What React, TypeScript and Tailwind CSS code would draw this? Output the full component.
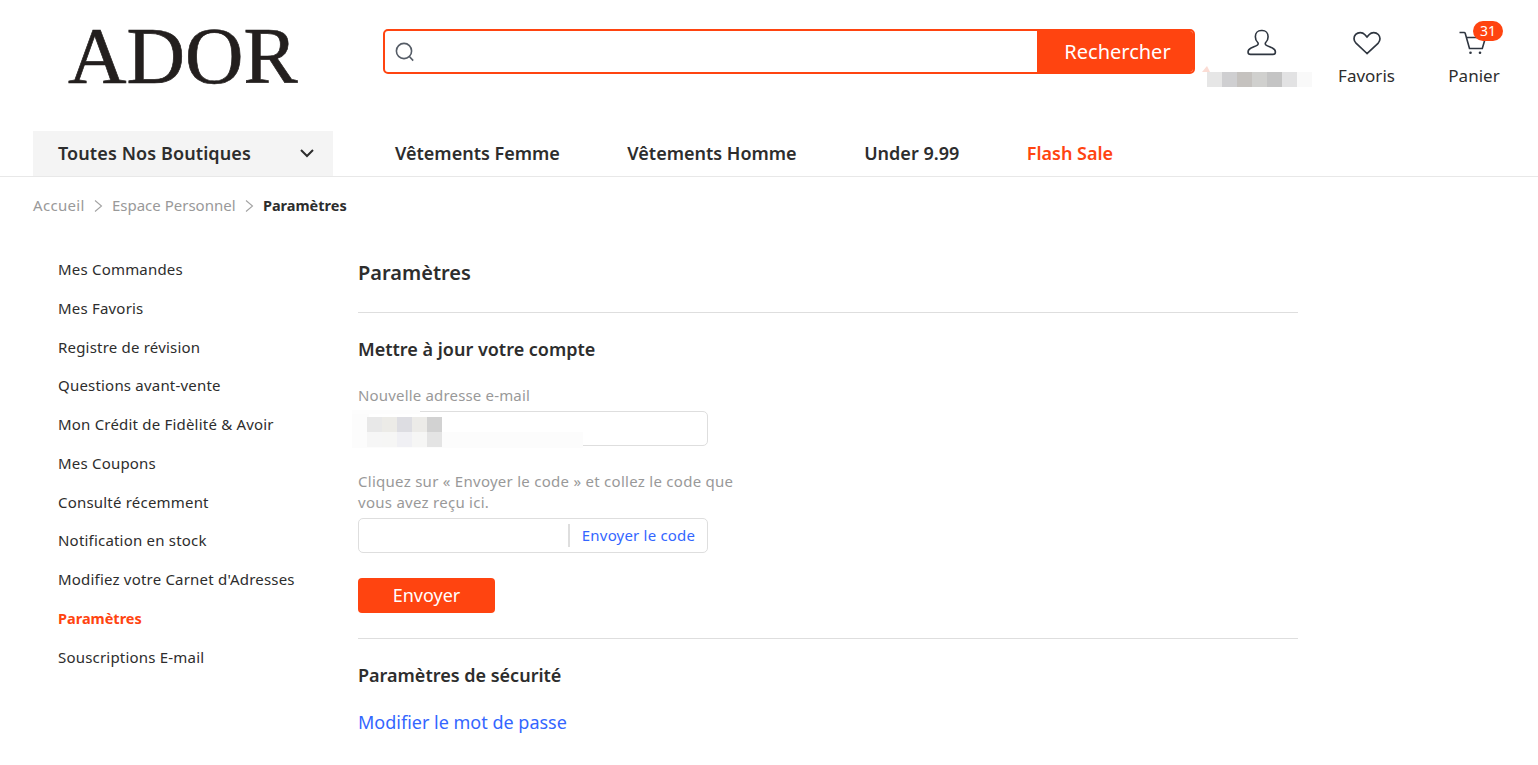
const sideLinks = [
  "Mes Commandes",
  "Mes Favoris",
  "Registre de révision",
  "Questions avant-vente",
  "Mon Crédit de Fidèlité & Avoir",
  "Mes Coupons",
  "Consulté récemment",
  "Notification en stock",
  "Modifiez votre Carnet d'Adresses",
  "Paramètres",
  "Souscriptions E-mail",
];

const nameBlur = ["#e6e6e6", "#cfcfd1", "#c5c2bf", "#d0d0ce", "#c4c4c4", "#e2e2e3", "#f9f9f9"];
const emailBlurTop = ["#e8e8e8", "#ecebe7", "#dddde2", "#ecebe8", "#d2d2d2"];
const emailBlurBottom = ["#f6f6f6", "#f6f6f5", "#f0f0f4", "#f6f6f5", "#e4e4e4"];

function Chevron() {
  return (
    <svg width="9" height="14" viewBox="0 0 9 14" fill="none" stroke="#a3a3a3" strokeWidth="1.1">
      <path d="M1 1.5 7.5 7 1 12.5" />
    </svg>
  );
}

export default function App() {
  return (
    <div className="min-h-[765px] bg-white font-['Noto_Sans',sans-serif] text-[#2d2d2d]">
      <header className="flex h-[131px] items-start">
        <div className="w-[383px] shrink-0 pl-[68px] pt-[9px]">
          <span className="block font-['Liberation_Serif',serif] text-[81px] leading-[94px] text-[#231f1e] [-webkit-text-stroke:0.7px_#231f1e]">ADOR</span>
        </div>
        <div className="mt-[29px] flex h-[45px] w-[812px] shrink-0 overflow-hidden rounded-[5px] border-2 border-[#ff4410]">
          <div className="flex flex-1 items-center pl-[10px]">
            <svg width="20" height="20" viewBox="0 0 20 20" fill="none" stroke="#555c66" strokeWidth="1.6">
              <circle cx="9" cy="9" r="7.6" />
              <path d="m14.6 14.8 3.6 3.8" />
            </svg>
          </div>
          <div className="flex w-[156px] items-center justify-center bg-[#ff4410] pl-[5px] text-[20px] text-white">Rechercher</div>
        </div>
        <div className="relative w-[117px] shrink-0 pt-[29px]">
          <svg className="ml-[52px]" width="30" height="29" viewBox="0 0 30 29" fill="none" stroke="#2f3640" strokeWidth="1.7">
            <path d="M15 1.2c-3.7 0-6.2 2.8-6.2 6.6 0 2.6 1 4.7 2.5 6.1.7.7.6 2.2-.4 2.8-1.5.9-4.2 1.8-6.6 2.9-1.9.9-3.2 2.3-3.2 4.2 0 1.5.9 2.6 2.6 2.6h23.6c1.7 0 2.6-1.1 2.6-2.6 0-1.9-1.3-3.3-3.2-4.2-2.4-1.1-5.1-2-6.6-2.9-1-.6-1.1-2.1-.4-2.8 1.5-1.4 2.5-3.5 2.5-6.1 0-3.8-2.5-6.6-6.2-6.6Z" transform="translate(0 .3) scale(.95)" />
          </svg>
          <div className="ml-[12px] mt-[14px] flex">
            {nameBlur.map((c) => (
              <div key={c} className="h-[15px] w-[15px]" style={{ backgroundColor: c }} />
            ))}
          </div>
          <svg className="absolute left-[7px] top-[66px]" width="8" height="6" viewBox="0 0 8 6">
            <path d="M0 6 5 0l3 6Z" fill="#fbdcd4" />
          </svg>
        </div>
        <div className="flex w-[106px] shrink-0 flex-col items-center pt-[31px] pl-[3px]">
          <svg width="28" height="24" viewBox="0 0 28 24" fill="none" stroke="#2f3640" strokeWidth="1.7">
            <path d="M14 22.5 3 12.2C.4 9.6.4 5.8 2.7 3.4 5.2 1 9.4 1 11.7 3.5L14 6l2.3-2.5c2.3-2.5 6.5-2.5 9 0 2.3 2.4 2.3 6.2-.3 8.8Z" />
          </svg>
          <span className="mt-[9px] text-[17px] leading-[24px]">Favoris</span>
        </div>
        <div className="relative flex w-[107px] shrink-0 flex-col items-center pt-[31px] pl-[5px]">
          <svg className="ml-[-3px]" width="28" height="24" viewBox="0 0 28 24" fill="none" stroke="#2f3640" strokeWidth="1.6">
            <path d="M.5 1.5h4.6c.6 0 .9.3 1.1.8l4.3 15.2h12.8L26.5 6.5H7" />
            <circle cx="11.5" cy="21.8" r="1.3" fill="#2f3640" stroke="none" />
            <circle cx="21" cy="21.8" r="1.3" fill="#2f3640" stroke="none" />
          </svg>
          <span className="absolute left-[55px] top-[21px] flex h-[20px] w-[30px] items-center justify-center rounded-full bg-[#ff4410] text-[14px] leading-none text-white">31</span>
          <span className="mt-[9px] text-[17px] leading-[24px]">Panier</span>
        </div>
      </header>

      <nav className="flex h-[46px] items-stretch border-b border-[#e8e8e8] pl-[33px] text-[18px] font-semibold">
        <div className="flex w-[300px] items-center justify-between bg-[#f4f4f4] pl-[25px] pr-[19px]">
          <span className="tracking-[0.1px]">Toutes Nos Boutiques</span>
          <svg width="14" height="9" viewBox="0 0 14 9" fill="none" stroke="#2d2d2d" strokeWidth="2">
            <path d="m1 1 6 6 6-6" />
          </svg>
        </div>
        <div className="ml-[62px] flex items-center gap-[67.5px]">
          <span>Vêtements Femme</span>
          <span>Vêtements Homme</span>
          <span>Under 9.99</span>
          <span className="text-[#ff4410]">Flash Sale</span>
        </div>
      </nav>

      <div className="flex h-[57px] items-center gap-[9.2px] pl-[33px] text-[15px] text-[#999999]">
        <span className="tracking-[0.3px]">Accueil</span>
        <Chevron />
        <span>Espace Personnel</span>
        <Chevron />
        <span className="text-[14.5px] font-bold text-[#2d2d2d]">Paramètres</span>
      </div>

      <div className="flex">
        <aside className="w-[358px] shrink-0 pl-[58px] pt-[24px]">
          <ul className="flex flex-col gap-[16.75px] text-[15px] leading-[22px] tracking-[0.2px]">
            {sideLinks.map((link) => (
              <li key={link} className={link === "Paramètres" ? "text-[14.5px] font-bold tracking-normal text-[#ff4410]" : ""}>
                {link}
              </li>
            ))}
          </ul>
        </aside>

        <main className="w-[940px] pt-[25px]">
          <h1 className="pb-[25px] text-[20px] font-semibold leading-[28px]">Paramètres</h1>
          <section className="border-t border-[#dedede] pt-[23px]">
            <h2 className="text-[18px] font-semibold leading-[26px]">Mettre à jour votre compte</h2>
            <label className="mt-[21px] block text-[15px] leading-[24px] tracking-[0.17px] text-[#999999]">Nouvelle adresse e-mail</label>
            <div className="relative mt-[4px] h-[35px] w-[350px] rounded-[5px] border border-[#dedede]">
              <div className="absolute left-[-7px] top-[-2px] h-[38px] w-[17px] bg-[#fcfcfc]" />
              <div className="absolute left-[-7px] top-[-2px] h-[4px] w-[68px] bg-[#fdfdfd]" />
              <div className="absolute left-[8px] top-[20px] h-[16px] w-[216px] bg-[#fcfcfc]" />
              <div className="absolute left-[8px] top-[5px] flex flex-col">
                <div className="flex">
                  {emailBlurTop.map((c, i) => (
                    <div key={i} className="h-[15px] w-[15px]" style={{ backgroundColor: c }} />
                  ))}
                </div>
                <div className="flex">
                  {emailBlurBottom.map((c, i) => (
                    <div key={i} className="h-[15px] w-[15px]" style={{ backgroundColor: c }} />
                  ))}
                </div>
              </div>
            </div>
            <p className="mt-[25px] w-[385px] text-[15px] leading-[21px] tracking-[0.27px] text-[#999999]">
              Cliquez sur « Envoyer le code » et collez le code que vous avez reçu ici.
            </p>
            <div className="mt-[5px] flex h-[35px] w-[350px] items-center justify-end rounded-[5px] border border-[#dedede]">
              <div className="flex h-[23px] w-[139px] items-center justify-center border-l-2 border-[#dedede] text-[15px] tracking-[0.2px] text-[#3366ff]">
                Envoyer le code
              </div>
            </div>
            <button className="mt-[25px] flex h-[35px] w-[137px] items-center justify-center rounded-[4px] bg-[#ff4410] text-[18px] text-white">
              Envoyer
            </button>
          </section>
          <section className="mt-[25px] border-t border-[#dedede] pt-[23px]">
            <h2 className="text-[18px] font-semibold leading-[26px]">Paramètres de sécurité</h2>
            <a className="mt-[21px] block text-[18px] leading-[26px] text-[#3366ff]">Modifier le mot de passe</a>
          </section>
        </main>
      </div>
    </div>
  );
}
